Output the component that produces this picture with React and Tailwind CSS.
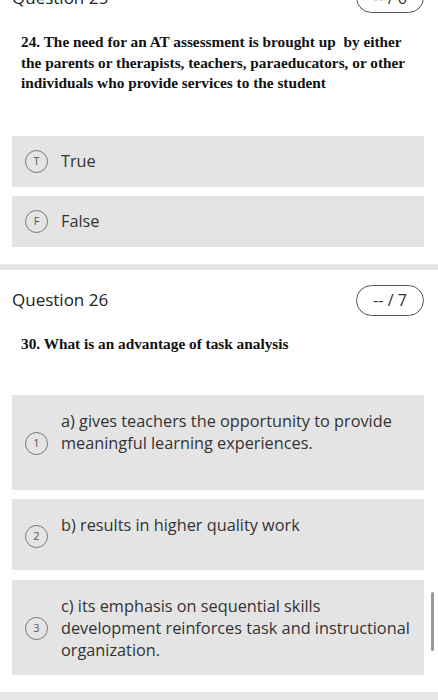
import React from "react";

const sans = { fontFamily: '"Open Sans", "Noto Sans", sans-serif' };
const serif = { fontFamily: '"Liberation Serif", "Times New Roman", serif' };

function Badge({ text }) {
  return (
    <div
      className="w-[68px] h-[31px] rounded-full border-[1.5px] border-[#555] flex items-center justify-center text-[16px] text-[#333]"
      style={sans}
    >
      {text}
    </div>
  );
}

function Option({ letter, lines, extra, pt = "pt-[14px]", pb = "pb-[14px]" }) {
  return (
    <div className={`bg-[#e4e4e4] flex items-center pl-[13px] pr-[2px] ${pt} ${pb}`}>
      <div className="w-[23px] h-[23px] shrink-0 rounded-full border border-[#777] flex items-center justify-center text-[11px] text-[#555]" style={sans}>
        {letter}
      </div>
      <div className="ml-[13px] flex-1 text-[16.3px] leading-[22px] text-[#333]" style={sans}>
        {lines.map((l, i) => (
          <div key={i} className="whitespace-nowrap">{l}</div>
        ))}
        {extra && <div className="h-[22px]" />}
      </div>
    </div>
  );
}

function Question({ title, score, text, children, textMt = "mt-[19px]", optMt = "mt-[42px]" }) {
  return (
    <div className="pl-[12px] pr-[14px] pt-[15px] pb-[17px]">
      <div className="flex items-center justify-between">
        <div className="text-[17px] text-[#222]" style={sans}>{title}</div>
        <Badge text={score} />
      </div>
      <div className={`pl-[9px] ${textMt} text-[15.3px] leading-[20.5px] font-bold text-[#111]`} style={serif}>
        {text.map((t, i) => (
          <div key={i} className="whitespace-pre">{t}</div>
        ))}
      </div>
      <div className={`${optMt} flex flex-col gap-[9px]`}>{children}</div>
    </div>
  );
}

export default function App() {
  return (
    <div className="w-[438px] h-[700px] overflow-hidden bg-white relative">
      <div className="-mt-[33px]">
        <Question
          title="Question 25"
          score="-- / 6"
          text={[
            "24. The need for an AT assessment is brought up  by either",
            "the parents or therapists, teachers, paraeducators, or other",
            "individuals who provide services to the student",
          ]}
        >
          <Option letter="T" lines={["True"]} />
          <Option letter="F" lines={["False"]} />
        </Question>
        <div className="h-[6px] bg-[#e6e6e6]" />
        <Question
          title="Question 26"
          score="-- / 7"
          textMt="mt-[18px]"
          optMt="mt-[41px]"
          text={["30. What is an advantage of task analysis"]}
        >
          <Option
            letter="1"
            pt="pt-[15px]"
            pb="pb-[14px]"
            extra
            lines={["a) gives teachers the opportunity to provide", "meaningful learning experiences."]}
          />
          <Option letter="2" pt="pt-[15px]" pb="pb-[12px]" extra lines={["b) results in higher quality work"]} />
          <div className="mt-[1px]">
            <Option
              letter="3"
              pt="pt-[15px]"
              pb="pb-[14px]"
              lines={[
                "c) its emphasis on sequential skills",
                "development reinforces task and instructional",
                "organization.",
              ]}
            />
          </div>
        </Question>
        <div className="h-[8px] bg-[#e6e6e6]" />
      </div>
      <div className="absolute left-[431px] top-[592px] w-[3px] h-[59px] rounded-full bg-[#999]" />
    </div>
  );
}
